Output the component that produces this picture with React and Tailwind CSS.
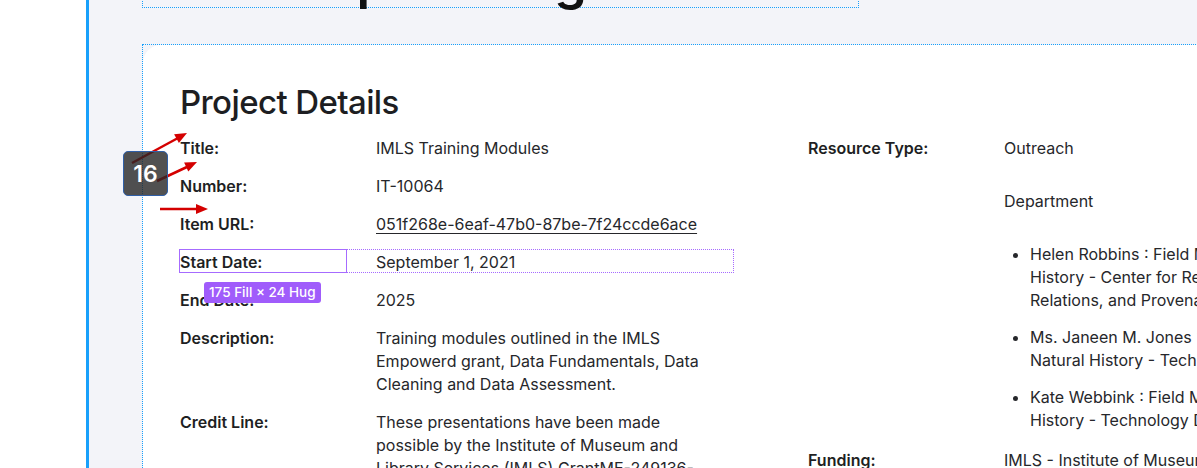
import React from 'react';

const left = [
  { label: 'Title:', value: 'IMLS Training Modules' },
  { label: 'Number:', value: 'IT-10064' },
  { label: 'Item URL:', value: '051f268e-6eaf-47b0-87be-7f24ccde6ace', link: true },
  { label: 'Start Date:', value: 'September 1, 2021', selected: true },
  { label: 'End Date:', value: '2025' },
  { label: 'Description:', value: 'Training modules outlined in the IMLS Empowerd grant, Data Fundamentals, Data Cleaning and Data Assessment.' },
  { label: 'Credit Line:', value: 'These presentations have been made possible by the Institute of Museum and Library Services (IMLS) GrantME-249136-OMS-21.' },
];

const contacts = [
  'Helen Robbins : Field Museum of Natural History - Center for Repatriation, Indigenous Relations, and Provenance Research',
  'Ms. Janeen M. Jones : Field Museum of Natural History - Technology Department',
  'Kate Webbink : Field Museum of Natural History - Technology Department',
];

function Row({ label, children, selected, wide }) {
  return (
    <div className="relative flex items-start">
      {selected && (
        <>
          <div className="absolute -left-px -top-px h-[24px] w-[555px] border border-dotted border-[#a66bff]" />
          <div className="absolute -left-px -top-px h-[24px] w-[168px] border-[1.5px] border-solid border-[#a66bff]" />
          <div className="absolute left-[24px] top-[32px] z-10 rounded-[3px] bg-[#a05cfb] px-[5px] text-[13.5px] font-medium leading-[21px] text-white">
            175 Fill × 24 Hug
          </div>
        </>
      )}
      <div className="w-[167px] shrink-0 text-[16px] font-semibold leading-[24px] text-[#1e1f23]">{label}</div>
      <div className={`ml-[29px] pt-px text-[16px] leading-[23px] text-[#26272b] ${wide ? 'w-[375px]' : 'max-w-[340px]'}`}>
        {children}
      </div>
    </div>
  );
}

export default function App() {
  return (
    <div className="relative flex h-[468px] w-[1197px] overflow-hidden bg-white font-['Inter',sans-serif] text-[#1f2024]">
      <div className="w-[86px] shrink-0 bg-white" />
      <div className="w-[3px] shrink-0 bg-[#18a0fb]" />
      <main className="min-w-0 flex-1 bg-[#f3f4f9] pl-[53px]">
        {/* page heading, mostly scrolled out of view */}
        <div className="-mt-[46px] w-[717px] border border-dotted border-[#18a0fb]">
          <h1 className="whitespace-nowrap pl-[2px] text-[52px] font-semibold leading-[52px] tracking-[-0.8px] text-[#111]">
            IMLS Empowering Data
          </h1>
        </div>

        <div className="mt-[36px] w-[1200px] border border-dotted border-[#18a0fb]">
          <div className="h-[440px] rounded-tl-[18px] bg-white pl-[37px] pt-[37px]">
            <h2 className="text-[33px] font-medium leading-[40px] tracking-[-0.6px] text-[#1d1e22]">Project Details</h2>

            <div className="mt-[14px] flex gap-[74px]">
              <div className="flex w-[554px] shrink-0 flex-col gap-[14px]">
                {left.map((r) => (
                  <Row key={r.label} label={r.label} selected={r.selected}>
                    {r.link ? <a href="#" className="underline underline-offset-[3px]">{r.value}</a> : r.value}
                  </Row>
                ))}
              </div>

              <div className="flex w-[560px] shrink-0 flex-col gap-[14px]">
                <Row label="Resource Type:">Outreach</Row>
                <Row label="">
                  <div className="mt-[15px]">Department</div>
                </Row>
                <Row label="" wide>
                  <ul className="mt-[15px] flex list-disc flex-col gap-[14px] pl-[26px]">
                    {contacts.map((c) => (
                      <li key={c}>{c}</li>
                    ))}
                  </ul>
                </Row>
                <div className="mt-[2px]">
                  <Row label="Funding:">IMLS - Institute of Museum and Library Services</Row>
                </div>
              </div>
            </div>
          </div>
        </div>
      </main>

      {/* spacing annotation */}
      <svg className="pointer-events-none absolute left-0 top-0" width="1197" height="468">
        <line x1="132" y1="163" x2="178" y2="138" stroke="#d40000" strokeWidth="2.5" />
        <polygon points="187,133 178.9,143.1 174.1,134.3" fill="#d40000" />
        <line x1="157" y1="181" x2="188" y2="166.5" stroke="#d40000" strokeWidth="2.5" />
        <polygon points="197,162 188.3,171.6 184.1,162.6" fill="#d40000" />
        <line x1="160" y1="209" x2="198" y2="209" stroke="#d40000" strokeWidth="2.5" />
        <polygon points="208,209 196,204 196,214" fill="#d40000" />
      </svg>
      <div className="absolute left-[123px] top-[151px] flex h-[45px] w-[45px] items-center justify-center rounded-[5px] border-[1.5px] border-[#2f5fa8] bg-[#262626]/80 pt-[2px] text-[23px] font-semibold text-white">
        16
      </div>
    </div>
  );
}
